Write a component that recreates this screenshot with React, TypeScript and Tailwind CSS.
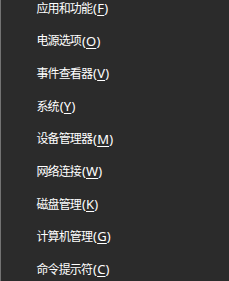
import React from "react";

const items: [string, string][] = [
  ["应用和功能", "F"],
  ["电源选项", "O"],
  ["事件查看器", "V"],
  ["系统", "Y"],
  ["设备管理器", "M"],
  ["网络连接", "W"],
  ["磁盘管理", "K"],
  ["计算机管理", "G"],
  ["命令提示符", "C"],
];

export default function App() {
  return (
    <div className="w-[229px] h-[281px] overflow-hidden bg-[#2b2b2b] border-l border-[#737373] flex flex-col">
      <div
        className="-mt-[7.5px] flex flex-col text-white text-[12px]"
        style={{ fontFamily: '"Noto Sans", "Noto Sans CJK SC", sans-serif' }}
      >
        {items.map(([label, key]) => (
          <div key={key} className="h-[32.625px] flex items-center pl-[35.5px] whitespace-nowrap">
            <span className="tracking-[-0.9px]">{label}</span>
            <span className="text-[13px] tracking-[0.2px] pl-[1px]">
              (<span className="underline underline-offset-[2px]">{key}</span>)
            </span>
          </div>
        ))}
      </div>
    </div>
  );
}
